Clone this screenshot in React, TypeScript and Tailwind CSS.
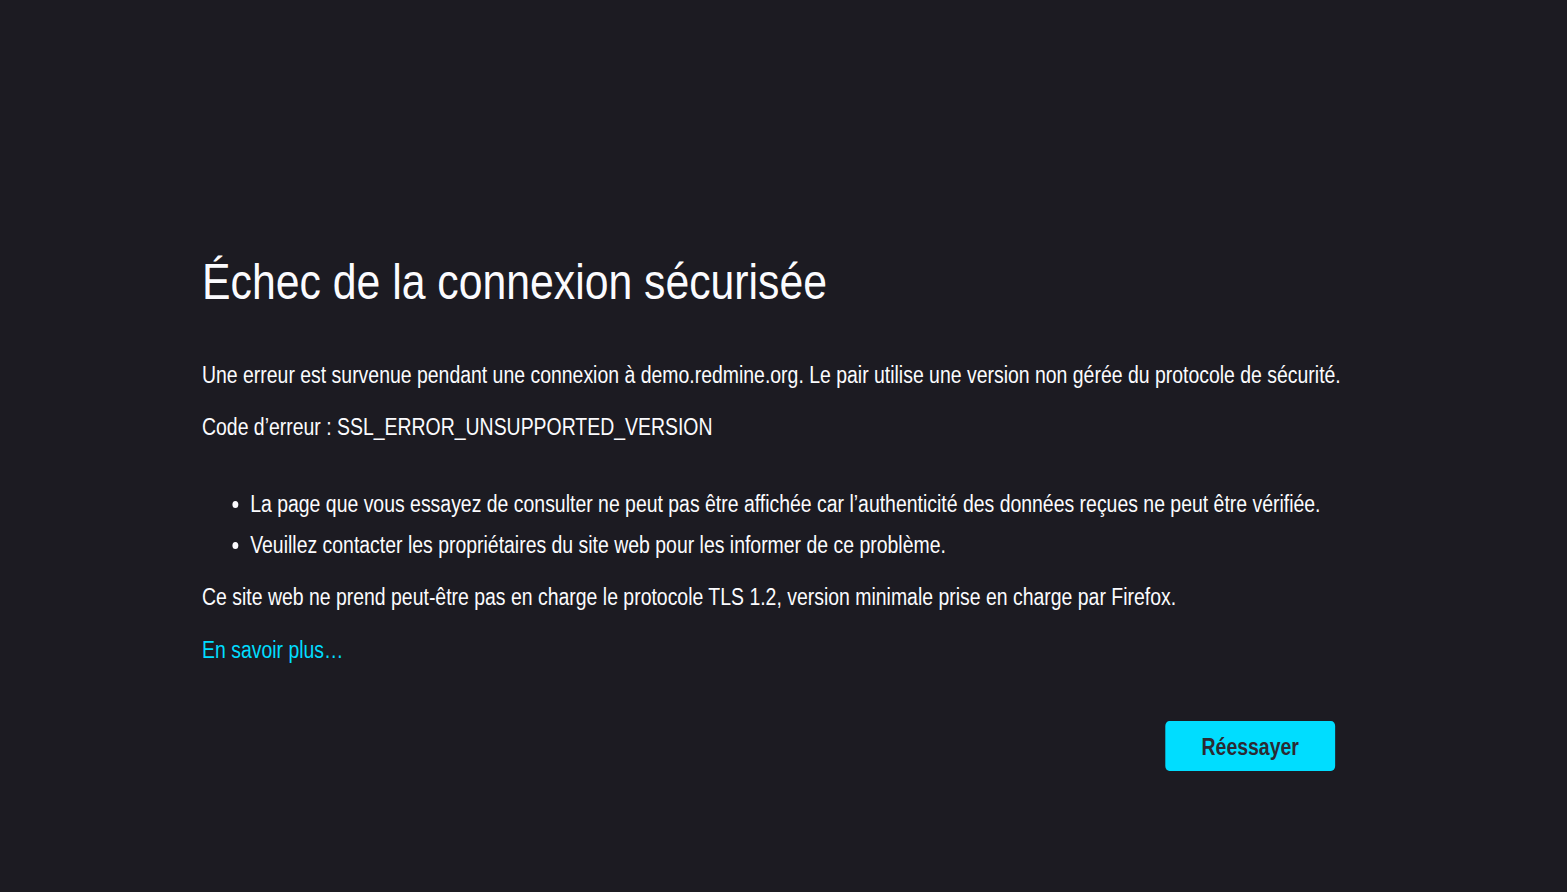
export default function App() {
  return (
    <div
      className="min-h-[892px] w-full overflow-hidden bg-[#1c1b22] text-[#fbfbfe] text-[23px] leading-[1.5]"
      style={{ fontFamily: '"Liberation Sans", Arial, sans-serif' }}
    >
      {/* narrow face isn't installed, so the block is squeezed horizontally instead */}
      <div className="ml-[202px] w-[1385px] pt-[252px] origin-top-left scale-x-[0.845]">
        <h1 className="text-[50.6px] font-normal leading-[1.2] mb-[45px]">Échec de la connexion sécurisée</h1>
        <p className="mb-[18px]">
          Une erreur est survenue pendant une connexion à demo.redmine.org. Le pair utilise une version non gérée du protocole de sécurité.
        </p>
        <p className="mb-[42px]">Code d’erreur : SSL_ERROR_UNSUPPORTED_VERSION</p>
        <ul className="list-disc pl-[57px] mb-[17px]">
          <li className="mb-[7px]">
            La page que vous essayez de consulter ne peut pas être affichée car l’authenticité des données reçues ne peut être vérifiée.
          </li>
          <li>Veuillez contacter les propriétaires du site web pour les informer de ce problème.</li>
        </ul>
        <p className="mb-[19px]">
          Ce site web ne prend peut-être pas en charge le protocole TLS 1.2, version minimale prise en charge par Firefox.
        </p>
        <a className="text-[#00ddff] cursor-pointer">En savoir plus…</a>
        <div className="flex justify-end mr-[44px] mt-[53px]">
          <button className="w-[201px] h-[50px] pt-[3px] rounded-[5px] bg-[#00ddff] text-[#2b2a33] font-bold">
            Réessayer
          </button>
        </div>
      </div>
    </div>
  );
}
